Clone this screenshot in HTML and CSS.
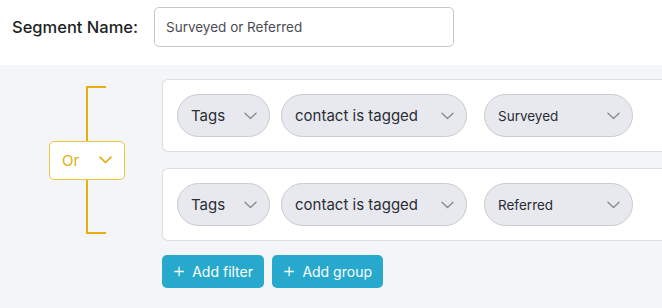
FILE: index.html
```html
<!DOCTYPE html>
<html>
<head>
<meta charset="utf-8">
<link rel="stylesheet" href="styles.css">
</head>
<body>
<div class="header">
  <label class="seg-label">Segment Name:</label>
  <div class="seg-input">Surveyed or Referred</div>
</div>
<div class="main">
  <div class="group">
    <div class="logic">
      <div class="bracket top"></div>
      <div class="or-box">
        <span>Or</span>
        <svg class="chev" width="13" height="8" viewBox="0 0 13 8"><path d="M1 1.2 L6.5 6.5 L12 1.2" fill="none" stroke="currentColor" stroke-width="1.6" stroke-linecap="round" stroke-linejoin="round"/></svg>
      </div>
      <div class="bracket bottom"></div>
    </div>
    <div class="cards">
      <div class="card">
        <div class="pill pill-field"><span>Tags</span><svg class="chev" width="13" height="8" viewBox="0 0 13 8"><path d="M1 1.2 L6.5 6.5 L12 1.2" fill="none" stroke="currentColor" stroke-width="1.5" stroke-linecap="round" stroke-linejoin="round"/></svg></div>
        <div class="pill pill-op"><span>contact is tagged</span><svg class="chev" width="13" height="8" viewBox="0 0 13 8"><path d="M1 1.2 L6.5 6.5 L12 1.2" fill="none" stroke="currentColor" stroke-width="1.5" stroke-linecap="round" stroke-linejoin="round"/></svg></div>
        <div class="pill pill-val"><span>Surveyed</span><svg class="chev" width="13" height="8" viewBox="0 0 13 8"><path d="M1 1.2 L6.5 6.5 L12 1.2" fill="none" stroke="currentColor" stroke-width="1.5" stroke-linecap="round" stroke-linejoin="round"/></svg></div>
      </div>
      <div class="card">
        <div class="pill pill-field"><span>Tags</span><svg class="chev" width="13" height="8" viewBox="0 0 13 8"><path d="M1 1.2 L6.5 6.5 L12 1.2" fill="none" stroke="currentColor" stroke-width="1.5" stroke-linecap="round" stroke-linejoin="round"/></svg></div>
        <div class="pill pill-op"><span>contact is tagged</span><svg class="chev" width="13" height="8" viewBox="0 0 13 8"><path d="M1 1.2 L6.5 6.5 L12 1.2" fill="none" stroke="currentColor" stroke-width="1.5" stroke-linecap="round" stroke-linejoin="round"/></svg></div>
        <div class="pill pill-val"><span>Referred</span><svg class="chev" width="13" height="8" viewBox="0 0 13 8"><path d="M1 1.2 L6.5 6.5 L12 1.2" fill="none" stroke="currentColor" stroke-width="1.5" stroke-linecap="round" stroke-linejoin="round"/></svg></div>
      </div>
    </div>
  </div>
  <div class="actions">
    <button class="btn btn-filter"><svg width="13" height="13" viewBox="0 0 13 13"><path d="M6.5 0.5 V12.5 M0.5 6.5 H12.5" stroke="currentColor" stroke-width="1.6" fill="none"/></svg><span>Add filter</span></button>
    <button class="btn btn-group"><svg width="13" height="13" viewBox="0 0 13 13"><path d="M6.5 0.5 V12.5 M0.5 6.5 H12.5" stroke="currentColor" stroke-width="1.6" fill="none"/></svg><span>Add group</span></button>
  </div>
</div>
</body>
</html>
```
FILE: styles.css
```css
html, body {
  margin: 0;
  padding: 0;
  overflow: hidden;
  width: 662px;
  height: 308px;
}
body {
  font-family: Inter, "Open Sans", sans-serif;
  background: #f4f5f8;
  color: #23262e;
}
.header {
  background: #ffffff;
  height: 65px;
  box-sizing: border-box;
  padding: 7px 0 0 12px;
  display: flex;
  align-items: flex-start;
}
.seg-label {
  width: 142px;
  height: 40px;
  line-height: 40px;
  font-size: 16.5px;
  font-weight: 500;
  color: #1d1f24;
}
.seg-input {
  width: 300px;
  height: 40px;
  box-sizing: border-box;
  border: 1px solid #c5c7cc;
  border-radius: 5px;
  padding: 0 11px;
  line-height: 38px;
  font-size: 13.5px;
  color: #4a4d54;
  background: #fff;
}
.main {
  padding-top: 14px;
}
.group {
  display: flex;
}
.logic {
  width: 76px;
  margin-left: 49px;
  margin-right: 37px;
  padding: 7px 0;
  display: flex;
  flex-direction: column;
}
.bracket {
  flex: 1;
  margin-left: 37px;
  width: 18px;
  border-left: 2px solid #e8b00f;
}
.bracket.top {
  border-top: 2px solid #e8b00f;
}
.bracket.bottom {
  border-bottom: 2px solid #e8b00f;
}
.or-box {
  height: 39px;
  box-sizing: border-box;
  border: 1px solid #eec63a;
  border-radius: 5px;
  background: #fff;
  display: flex;
  align-items: center;
  justify-content: space-between;
  padding: 0 12px 0 12px;
  color: #e0ae0a;
  font-size: 15px;
}
.cards {
  flex: 1;
  display: flex;
  flex-direction: column;
  gap: 16px;
}
.card {
  background: #fff;
  border: 1px solid #dcdee2;
  border-right: none;
  border-radius: 6px 0 0 6px;
  padding: 14px;
  display: flex;
  align-items: center;
}
.pill {
  height: 43px;
  box-sizing: border-box;
  border: 1px solid #c9cbd0;
  border-radius: 22px;
  background: #e8e9ee;
  display: flex;
  align-items: center;
  justify-content: space-between;
  padding: 0 12px 0 13px;
  font-size: 15px;
  color: #2a2d35;
  white-space: nowrap;
}
.chev {
  color: #8d9096;
  flex: none;
}
.or-box .chev {
  color: #e0ae0a;
}
.pill-field {
  width: 93px;
  margin-right: 11px;
}
.pill-op {
  width: 186px;
  margin-right: 17px;
}
.pill-val {
  width: 149px;
  font-size: 13.5px;
}
.actions {
  display: flex;
  gap: 8px;
  padding: 14px 0 0 162px;
}
.btn {
  height: 33px;
  border: none;
  border-radius: 5px;
  background: #26a9cc;
  color: #fff;
  font-family: inherit;
  font-size: 14px;
  display: flex;
  align-items: center;
  gap: 8px;
  padding: 0 11px 0 12px;
  white-space: nowrap;
  box-sizing: border-box;
}
.btn-filter { width: 102px; }
.btn-group { width: 111px; }
```
